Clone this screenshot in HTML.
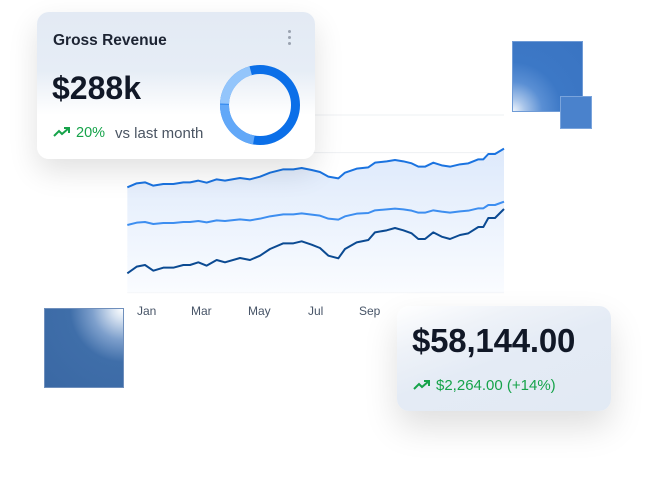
<!DOCTYPE html>
<html><head><meta charset="utf-8"><style>
*{margin:0;padding:0;box-sizing:border-box}
body{width:664px;height:496px;background:#fff;position:relative;overflow:hidden;font-family:"Liberation Sans",sans-serif}
.abs{position:absolute}
.card1{left:37px;top:12px;width:278px;height:147px;border-radius:12px;background:linear-gradient(180deg,#e3eaf4 0%,#e6edf6 40%,#f3f6fa 55%,#fff 70%);box-shadow:0 12px 30px rgba(0,0,0,.12)}
.card2{left:397px;top:306px;width:214px;height:105px;border-radius:12px;background:linear-gradient(160deg,#fff 0%,#eef2f8 25%,#e4ebf5 50%,#e2eaf4 100%);box-shadow:0 16px 34px rgba(0,0,0,.13)}
.lbl{font-size:12px;color:#475467;top:304px}
</style></head><body>
<svg class="abs" style="left:120px;top:100px" width="400" height="230" viewBox="0 0 1200 690">
<defs><linearGradient id="g" x1="0" y1="0" x2="0" y2="1"><stop offset="0" stop-color="#dde9fb"/><stop offset="1" stop-color="#fafcff"/></linearGradient></defs>
<g stroke="#eef0f3" stroke-width="3"><line x1="22" y1="45" x2="1152" y2="45"/><line x1="22" y1="158" x2="1152" y2="158"/><line x1="22" y1="262" x2="1152" y2="262"/><line x1="22" y1="368" x2="1152" y2="368"/><line x1="22" y1="470" x2="1152" y2="470"/><line x1="22" y1="578" x2="1152" y2="578"/></g>
<polygon fill="url(#g)" points="22,262 50,250 75,247 100,257 130,252 160,252 190,247 210,247 235,242 260,248 290,238 315,242 360,234 390,238 420,230 450,218 490,208 520,208 545,204 575,210 600,216 625,230 655,235 675,218 710,206 745,202 765,188 800,184 825,180 850,184 875,190 895,200 915,200 940,188 965,196 990,200 1020,193 1045,190 1075,178 1090,178 1105,162 1125,162 1152,146 1152,578 22,578"/>
<polyline fill="none" stroke="#1a73e0" stroke-width="6" stroke-linejoin="round" points="22,262 50,250 75,247 100,257 130,252 160,252 190,247 210,247 235,242 260,248 290,238 315,242 360,234 390,238 420,230 450,218 490,208 520,208 545,204 575,210 600,216 625,230 655,235 675,218 710,206 745,202 765,188 800,184 825,180 850,184 875,190 895,200 915,200 940,188 965,196 990,200 1020,193 1045,190 1075,178 1090,178 1105,162 1125,162 1152,146"/>
<polyline fill="none" stroke="#3d8ef0" stroke-width="6" stroke-linejoin="round" points="22,375 50,368 75,366 100,372 130,369 160,369 190,366 210,366 235,363 260,367 290,361 315,363 360,358 390,361 420,356 450,349 490,343 520,343 545,340 575,344 600,347 625,356 655,359 675,349 710,341 745,339 765,331 800,328 825,326 850,328 875,332 895,338 915,338 940,331 965,335 990,338 1020,334 1045,332 1075,325 1090,325 1105,315 1125,315 1152,305"/>
<polyline fill="none" stroke="#0b4a92" stroke-width="6" stroke-linejoin="round" points="22,520 50,500 75,495 100,512 130,503 160,503 190,495 210,495 235,487 260,497 290,480 315,487 360,474 390,480 420,467 450,447 490,430 520,430 545,424 575,434 600,444 625,467 655,475 675,447 710,427 745,420 765,397 800,391 825,384 850,391 875,400 895,417 915,417 940,397 965,410 990,417 1020,405 1045,400 1075,381 1090,381 1105,354 1125,354 1152,327"/>
</svg>
<div class="abs lbl" style="left:137px">Jan</div>
<div class="abs lbl" style="left:191px">Mar</div>
<div class="abs lbl" style="left:248px">May</div>
<div class="abs lbl" style="left:308px">Jul</div>
<div class="abs lbl" style="left:359px">Sep</div>

<div class="abs" style="left:512px;top:41px;width:71px;height:71px;background:radial-gradient(circle at 0% 100%,#eef4fc 0%,#a9c5ea 12%,#5a8fd4 30%,#3c78c6 50%,#3a74c2 100%);border:1px solid #6f9bd6"></div>
<div class="abs" style="left:560px;top:96px;width:32px;height:33px;background:#4a82cc;border:1px solid #7aa4dc"></div>
<div class="abs" style="left:44px;top:308px;width:80px;height:80px;background:radial-gradient(circle at 100% 0%,#ffffff 0%,#d5e1f0 10%,#7d9fcc 28%,#3f6ea9 48%,#3a68a4 100%);border:1px solid #6f8fbc"></div>

<div class="abs card1">
 <div class="abs" style="left:16px;top:20px;font-size:15.5px;font-weight:bold;color:#1d2433">Gross Revenue</div>
 <div class="abs" style="left:251px;top:18px;width:4px">
  <div style="width:3px;height:3px;border-radius:50%;background:#9aa3b0;margin-bottom:3px"></div>
  <div style="width:3px;height:3px;border-radius:50%;background:#9aa3b0;margin-bottom:3px"></div>
  <div style="width:3px;height:3px;border-radius:50%;background:#9aa3b0"></div>
 </div>
 <div class="abs" style="left:15px;top:58px;font-size:32px;font-weight:bold;color:#111827">$288k</div>
 <svg class="abs" style="left:16px;top:114px" width="18" height="12" viewBox="0 0 18 12"><polyline points="1,10 6,5 9,8 16,2" fill="none" stroke="#16a34a" stroke-width="2"/><polyline points="11,2 16,2 16,7" fill="none" stroke="#16a34a" stroke-width="2"/></svg>
 <div class="abs" style="left:39px;top:113px;font-size:14.5px;color:#16a34a">20%</div>
 <div class="abs" style="left:78px;top:113px;font-size:15px;color:#4b5563">vs last month</div>
 <svg class="abs" style="left:182px;top:52px" width="82" height="82" viewBox="0 0 82 82">
  <circle cx="41" cy="41" r="35.5" fill="none" stroke="#0b6fe8" stroke-width="9"/>
  <circle cx="41" cy="41" r="35.5" fill="none" stroke="#62a8f8" stroke-width="9" stroke-dasharray="50 223" transform="rotate(100 41 41)"/>
  <circle cx="41" cy="41" r="35.5" fill="none" stroke="#93c5fb" stroke-width="9" stroke-dasharray="45 223" transform="rotate(182 41 41)"/>
 </svg>
</div>

<div class="abs card2">
 <div class="abs" style="left:15px;top:16px;font-size:33px;color:#111827;font-weight:bold;letter-spacing:-.2px">$58,144.00</div>
 <svg class="abs" style="left:16px;top:73px" width="18" height="12" viewBox="0 0 18 12"><polyline points="1,10 6,5 9,8 16,2" fill="none" stroke="#16a34a" stroke-width="2"/><polyline points="11,2 16,2 16,7" fill="none" stroke="#16a34a" stroke-width="2"/></svg>
 <div class="abs" style="left:39px;top:71px;font-size:15px;color:#16a34a">$2,264.00 (+14%)</div>
</div>
</body></html>
